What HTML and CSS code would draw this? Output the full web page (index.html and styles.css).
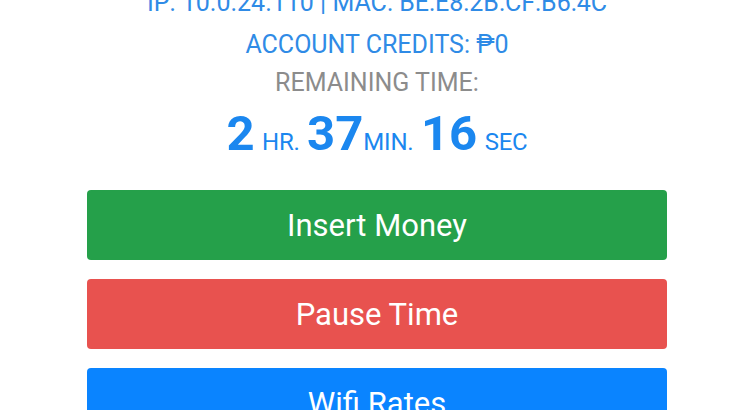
FILE: index.html
```html
<!DOCTYPE html>
<html>
<head>
<meta charset="utf-8">
<link rel="stylesheet" href="styles.css">
</head>
<body>
<div class="page">
  <div class="info">
    <div class="ip">IP: 10.0.24.110 | MAC: BE:E8:2B:CF:B6:4C</div>
    <div class="credits">ACCOUNT CREDITS: ₱0</div>
    <div class="remaining">REMAINING TIME:</div>
    <div class="timer"><span class="num">2</span> <span class="unit">HR.</span> <span class="num">37</span><span class="unit">MIN.</span> <span class="num">16</span> <span class="unit">SEC</span></div>
  </div>
  <div class="actions">
    <button class="btn btn-green">Insert Money</button>
    <button class="btn btn-red">Pause Time</button>
    <button class="btn btn-blue">Wifi Rates</button>
  </div>
</div>
</body>
</html>
```
FILE: styles.css
```css
html, body {
  margin: 0;
  padding: 0;
  background: #ffffff;
  overflow: hidden;
}
body {
  font-family: Roboto, "Liberation Sans", Arial, sans-serif;
}
.page {
  padding: 0 83px 0 87px;
}
.info {
  text-align: center;
}
.ip {
  margin-top: -16px;
  font-size: 25px;
  line-height: 38px;
  color: #2f8be6;
}
.credits {
  margin-top: 4px;
  font-size: 25px;
  line-height: 38px;
  color: #2f8be6;
}
.remaining {
  font-size: 25px;
  line-height: 38px;
  color: #8c8c8c;
}
.timer {
  margin-top: 8px;
  height: 48px;
  font-size: 30px;
  line-height: 48px;
  color: #1b87ef;
  white-space: nowrap;
}
.num {
  font-size: 49px;
  font-weight: 700;
}
.unit {
  font-size: 24px;
  letter-spacing: -0.2px;
}
.actions {
  margin-top: 32px;
  display: flex;
  flex-direction: column;
  gap: 19px;
}
.btn {
  height: 70px;
  border: 0;
  border-radius: 4px;
  color: #ffffff;
  font-family: Roboto, "Liberation Sans", Arial, sans-serif;
  font-size: 31px;
  padding: 0;
  display: flex;
  align-items: center;
  justify-content: center;
}
.btn-green { background: #25a04a; }
.btn-red { background: #e8524f; }
.btn-blue { background: #0a84ff; }
```
